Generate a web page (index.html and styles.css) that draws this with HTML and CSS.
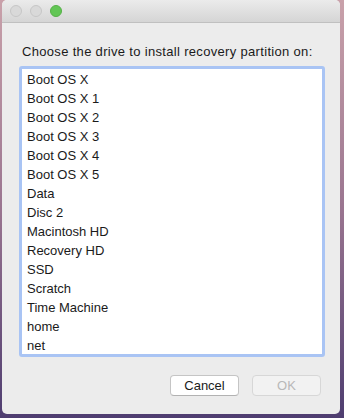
FILE: index.html
```html
<!DOCTYPE html>
<html lang="en">
<head>
    <meta charset="UTF-8">
    <title>Recovery Partition</title>
    <link rel="stylesheet" href="styles.css">
</head>
<body>
    <div class="window">
        <div class="titlebar">
            <span class="light"></span>
            <span class="light"></span>
            <span class="light green"></span>
        </div>
        <div class="content">
            <p class="prompt">Choose the drive to install recovery partition on:</p>
            <ul class="drives">
                <li>Boot OS X</li>
                <li>Boot OS X 1</li>
                <li>Boot OS X 2</li>
                <li>Boot OS X 3</li>
                <li>Boot OS X 4</li>
                <li>Boot OS X 5</li>
                <li>Data</li>
                <li>Disc 2</li>
                <li>Macintosh HD</li>
                <li>Recovery HD</li>
                <li>SSD</li>
                <li>Scratch</li>
                <li>Time Machine</li>
                <li>home</li>
                <li>net</li>
            </ul>
            <div class="buttons">
                <button class="btn">Cancel</button>
                <button class="btn" disabled>OK</button>
            </div>
        </div>
    </div>
</body>
</html>
```

FILE: styles.css
```css
* {
    margin: 0;
    padding: 0;
    box-sizing: border-box;
}

body {
    width: 344px;
    height: 418px;
    overflow: hidden;
    padding-left: 2px;
    background: linear-gradient(180deg, #c9a1aa 0%, #9a7590 50%, #4e3d70 100%);
    font-family: "Liberation Sans", Arial, sans-serif;
    font-size: 13px;
    color: #1a1a1a;
}

.window {
    width: 338px;
    height: 414px;
    background: #ececec;
    border-radius: 5px;
    overflow: hidden;
    display: flex;
    flex-direction: column;
}

.titlebar {
    height: 23px;
    flex-shrink: 0;
    display: flex;
    align-items: center;
    gap: 8px;
    padding-left: 8px;
    background: linear-gradient(180deg, #ebebeb 0%, #d5d5d5 100%);
    border-bottom: 1px solid #c0c0c0;
}

.light {
    width: 12px;
    height: 12px;
    border-radius: 50%;
    background: #d9d9d9;
    border: 1px solid #c6c6c6;
}

.light.green {
    background: #62c655;
    border-color: #55b047;
}

.content {
    padding: 21px 15px 0 17px;
}

.prompt {
    line-height: 16px;
    padding-left: 3px;
    margin-bottom: 6px;
    letter-spacing: 0.32px;
}

.drives {
    list-style: none;
    height: 291px;
    background: #fff;
    border: 3px solid #a9c4f4;
    border-radius: 3px;
    padding: 1px 5px;
}

.drives li {
    height: 19px;
    line-height: 19px;
}

.buttons {
    display: flex;
    justify-content: flex-end;
    gap: 13px;
    padding-right: 4px;
    margin-top: 18px;
}

.btn {
    width: 69px;
    height: 21px;
    font-family: inherit;
    font-size: 13px;
    color: #1a1a1a;
    background: #fff;
    border: 1px solid #c5c5c5;
    border-bottom-color: #b2b2b2;
    border-radius: 4px;
}

.btn:disabled {
    background: #f2f2f2;
    border-color: #d7d7d7;
    color: #b8b8b8;
}
```
